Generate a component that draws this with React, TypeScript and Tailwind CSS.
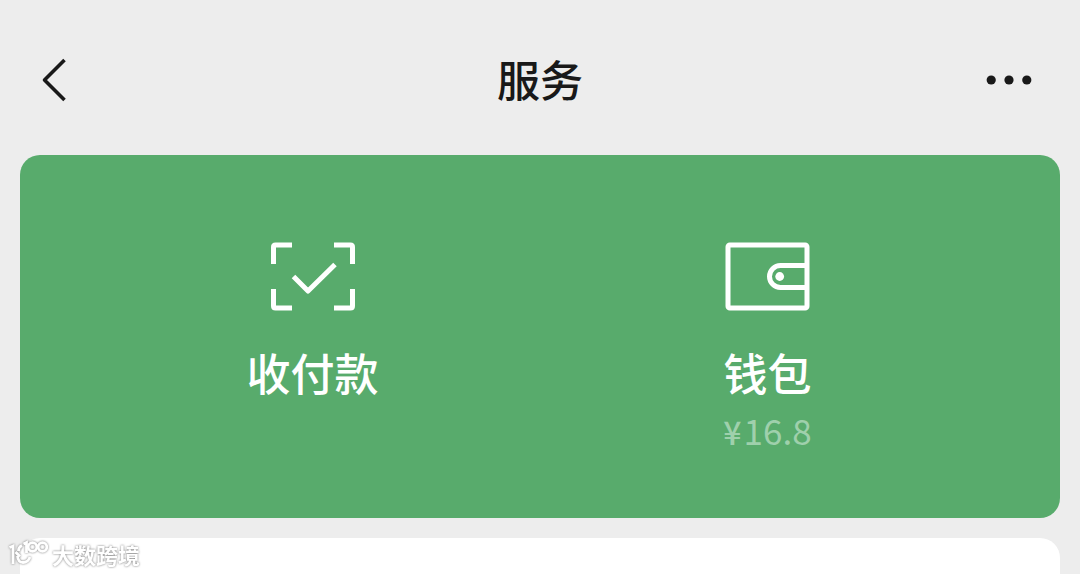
import type { ReactNode } from 'react';

function BackIcon() {
  return (
    <svg width="28" height="48" viewBox="0 0 28 48" fill="none" aria-hidden="true">
      <path d="M24.500 4L4.500 24L24.500 44" stroke="#191919" strokeWidth="3.600" strokeLinejoin="round" />
    </svg>
  );
}

function MoreIcon() {
  return (
    <svg width="46" height="12" viewBox="0 0 46 12" fill="#191919" aria-hidden="true">
      <circle cx="5.200" cy="6" r="4.600" />
      <circle cx="23" cy="6" r="4.600" />
      <circle cx="40.800" cy="6" r="4.600" />
    </svg>
  );
}

function PayIcon() {
  return (
    <svg width="86" height="70" viewBox="0 0 86 70" fill="none" stroke="white" strokeWidth="5" aria-hidden="true">
      <path d="M22 4H5.500Q3.500 4 3.500 6V23" />
      <path d="M64 4H80.500Q82.500 4 82.500 6V23" />
      <path d="M3.500 48V65Q3.500 67 5.500 67H22" />
      <path d="M82.500 48V65Q82.500 67 80.500 67H64" />
      <path d="M23.500 35.500L38 50L65 23.500" strokeLinejoin="round" />
    </svg>
  );
}

function WalletIcon() {
  return (
    <svg width="86" height="70" viewBox="0 0 86 70" fill="none" stroke="white" strokeWidth="5" aria-hidden="true">
      <rect x="3" y="4" width="79" height="63" rx="1.800" />
      <path d="M81 24.500H55.500A11 11 0 0 0 55.500 46.500H81" />
      <circle cx="54.700" cy="35.500" r="4.400" fill="white" stroke="none" />
    </svg>
  );
}

function Service({ icon, label, note }: { icon: ReactNode; label: string; note?: ReactNode }) {
  return (
    <button type="button" className="flex flex-col items-center text-white">
      {icon}
      <span className="mt-7 text-[44px] leading-[66px] font-medium">{label}</span>
      {note && <span className="text-[35px] leading-[50px] text-[#9fd0ac]">{note}</span>}
    </button>
  );
}

function Watermark() {
  return (
    <div className="absolute bottom-1.5 left-2 flex items-center gap-1 text-white drop-shadow-[0_0_1px_#777777]">
      <svg width="40" height="28" viewBox="0 0 40 28" fill="none" stroke="white" strokeWidth="2.800" aria-hidden="true">
        <path d="M1.500 7.500L5 6V24" />
        <path d="M14 5.500Q10.500 7 10.500 11" />
        <path d="M7.500 12L12 16.500" />
        <path d="M9.500 16Q10 22.500 15 22.500Q20 22.500 22 17" />
        <path d="M15.500 4L18.500 2.500V13" />
        <circle cx="24.500" cy="7" r="4.300" />
        <circle cx="34.500" cy="7" r="4.300" />
      </svg>
      <span className="text-[22px] leading-7 font-bold">大数跨境</span>
    </div>
  );
}

export default function App() {
  return (
    <div className="relative flex min-h-screen flex-col bg-[#ededed] px-5 font-['Noto_Sans_CJK_SC',sans-serif]">
      <header className="grid h-[155px] grid-cols-3 items-center px-5 pt-1 text-[#191919]">
        <button type="button" aria-label="返回" className="justify-self-start">
          <BackIcon />
        </button>
        <h1 className="pb-1 text-center text-[43px] leading-[60px] font-medium">服务</h1>
        <button type="button" aria-label="更多" className="mr-2 justify-self-end">
          <MoreIcon />
        </button>
      </header>
      <main className="flex flex-1 flex-col gap-5">
        <section className="grid grid-cols-2 items-start rounded-[20px] bg-[#58ab6c] px-[65px] pt-[86px] pb-[63px]">
          <Service icon={<PayIcon />} label="收付款" />
          <Service
            icon={<WalletIcon />}
            label="钱包"
            note={
              <>
                <span className="mr-0.5 text-[32px] leading-none font-medium">¥</span>16.8
              </>
            }
          />
        </section>
        <section className="flex-1 rounded-t-[20px] bg-white" />
      </main>
      <Watermark />
    </div>
  );
}
